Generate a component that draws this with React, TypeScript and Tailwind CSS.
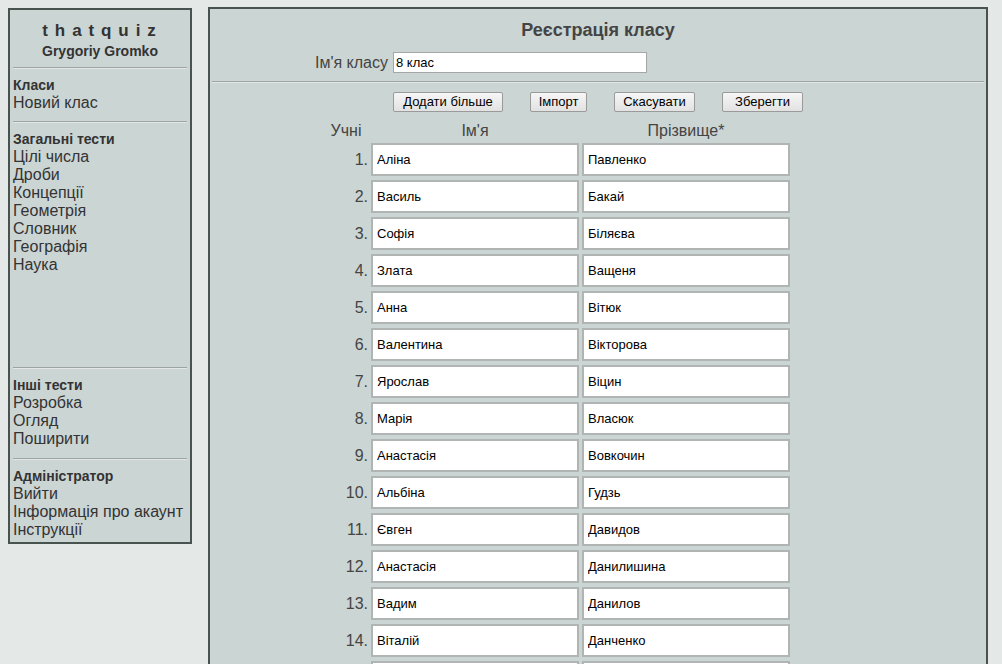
import React from "react";

const rows: [string, string][] = [
  ["Аліна", "Павленко"],
  ["Василь", "Бакай"],
  ["Софія", "Біляєва"],
  ["Злата", "Ващеня"],
  ["Анна", "Вітюк"],
  ["Валентина", "Вікторова"],
  ["Ярослав", "Віцин"],
  ["Марія", "Власюк"],
  ["Анастасія", "Вовкочин"],
  ["Альбіна", "Гудзь"],
  ["Євген", "Давидов"],
  ["Анастасія", "Данилишина"],
  ["Вадим", "Данилов"],
  ["Віталій", "Данченко"],
  ["", ""],
  ["", ""],
];

function Hr({ className = "" }: { className?: string }) {
  return (
    <div className={"h-[2px] border-t border-t-[#9ea4a3] border-b border-b-[#e2e6e5] " + className} />
  );
}

function Btn({ label, w }: { label: string; w: string }) {
  return (
    <button
      className={
        "h-[20px] rounded-[2px] border border-[#9a9a9a] bg-gradient-to-b from-[#f6f6f6] to-[#e2e2e2] text-[13px] leading-[18px] text-black " +
        w
      }
    >
      {label}
    </button>
  );
}

export default function App() {
  return (
    <div className="h-[664px] overflow-hidden bg-[#e4e8e6] font-['Liberation_Sans',Arial,sans-serif] text-[#333] flex items-start">
      <aside className="ml-[8px] mt-[8px] w-[184px] h-[536px] border-2 border-[#48534f] bg-[#cbd5d3] px-[3px] pt-[11px] shrink-0">
        <div className="text-center text-[17px] leading-[20px] font-bold tracking-[6.9px] pl-[5px] text-[#333]">
          thatquiz
        </div>
        <div className="mt-[2px] text-center text-[14px] leading-[16px] font-bold text-[#333]">
          Grygoriy Gromko
        </div>
        <Hr className="mt-[8px] mb-[7px]" />
        <div className="text-[14px] leading-[18px] font-bold">Класи</div>
        <div className="text-[16px] leading-[18px]">Новий клас</div>
        <Hr className="mt-[9px] mb-[7px]" />
        <div className="h-[228px]">
          <div className="text-[14px] leading-[18px] font-bold">Загальні тести</div>
          {["Цілі числа", "Дроби", "Концепції", "Геометрія", "Словник", "Географія", "Наука"].map((t) => (
            <div key={t} className="text-[16px] leading-[18px]">
              {t}
            </div>
          ))}
        </div>
        <Hr className="mt-[9px] mb-[7px]" />
        <div className="text-[14px] leading-[18px] font-bold">Інші тести</div>
        {["Розробка", "Огляд", "Поширити"].map((t) => (
          <div key={t} className="text-[16px] leading-[18px]">
            {t}
          </div>
        ))}
        <Hr className="mt-[10px] mb-[7px]" />
        <div className="text-[14px] leading-[18px] font-bold">Адміністратор</div>
        {["Вийти", "Інформація про акаунт", "Інструкції"].map((t) => (
          <div key={t} className="text-[16px] leading-[18px] whitespace-nowrap">
            {t}
          </div>
        ))}
      </aside>

      <main className="ml-[16px] mt-[7px] w-[780px] border-2 border-[#48534f] bg-[#cbd5d3] pt-[10px] pb-[40px] shrink-0">
        <h1 className="text-center text-[18px] leading-[22px] font-bold text-[#444]">Реєстрація класу</h1>
        <div className="mt-[11px] flex items-center">
          <div className="w-[178px] text-right text-[16px] leading-[18px] text-[#444]">Ім'я класу</div>
          <input
            readOnly
            value="8 клас"
            className="ml-[5px] w-[254px] h-[21px] bg-white border border-[#a6a6a6] px-[2px] text-[13px] text-black outline-none"
          />
        </div>
        <Hr className="mt-[8px] mx-[2px]" />
        <div className="mt-[9px] flex justify-center gap-[27px]">
          <Btn label="Додати більше" w="w-[110px]" />
          <Btn label="Імпорт" w="w-[57px]" />
          <Btn label="Скасувати" w="w-[81px]" />
          <Btn label="Зберегти" w="w-[81px]" />
        </div>
        <div className="mt-[10px] ml-[110px] w-[468px]">
          <div className="grid grid-cols-[48px_208px_208px] gap-x-[3px] text-[16px] leading-[18px] text-[#444]">
            <div className="text-center pl-[4px]">Учні</div>
            <div className="text-center">Ім'я</div>
            <div className="text-center">Прізвище*</div>
          </div>
          <div className="mt-[3px] flex flex-col gap-[4px]">
            {rows.map(([a, b], i) => (
              <div key={i} className="grid grid-cols-[48px_208px_208px] gap-x-[3px] items-center">
                <div className="text-right text-[16px] leading-[18px] text-[#444]">{i + 1}.</div>
                <input
                  readOnly
                  value={a}
                  className="h-[33px] w-[208px] bg-white border-2 border-[#b0b4b3] pl-[4px] text-[13px] text-black outline-none"
                />
                <input
                  readOnly
                  value={b}
                  className="h-[33px] w-[208px] bg-white border-2 border-[#b0b4b3] pl-[4px] text-[13px] text-black outline-none"
                />
              </div>
            ))}
          </div>
        </div>
      </main>
    </div>
  );
}
